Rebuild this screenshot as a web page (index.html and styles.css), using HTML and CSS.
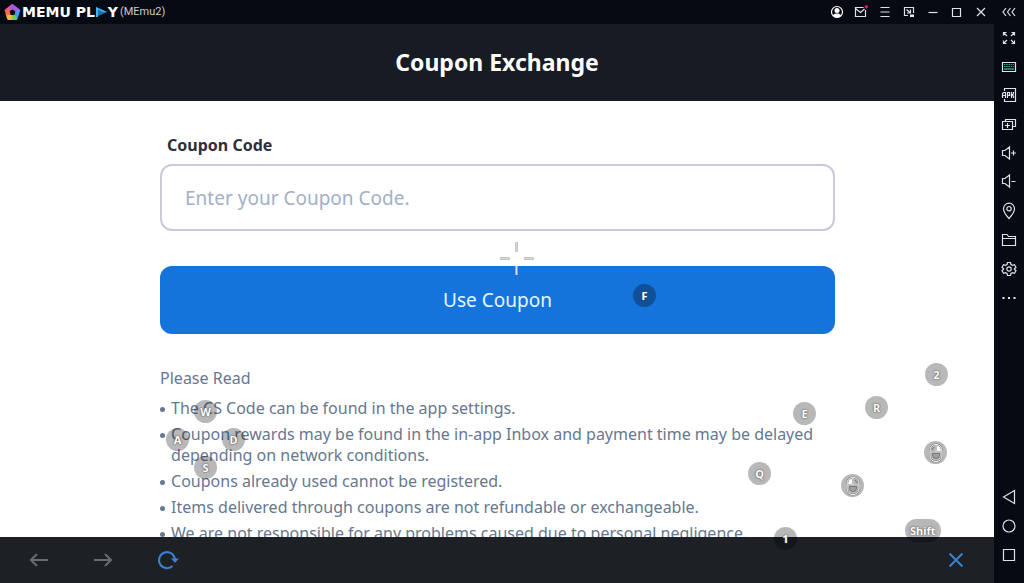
FILE: index.html
```html
<!DOCTYPE html>
<html lang="en">
<head>
<meta charset="utf-8">
<title>Coupon Exchange</title>
<link rel="stylesheet" href="styles.css">
</head>
<body>
<div class="window">
  <header class="titlebar">
    <div class="brand">
      <svg class="brand-mark" width="17" height="17" viewBox="0 0 17 17">
        <path fill="#e85c8f" d="M8 0L1 5.500L5 8L9 5Z"/>
        <path fill="#a45be0" d="M8 0Q8.500 0 9 .3L16 5.500L11.500 8L8.500 5.500L5 5.500Z"/>
        <path fill="#3f9cf0" d="M16 5.500Q16.500 6 16.300 6.500L13.500 15L10 11L11 7Z"/>
        <path fill="#6ad04a" d="M13.500 15Q13 16 12 16L7 16L6.500 10.500L10.500 10.500Z"/>
        <path fill="#f6b73c" d="M8 16L4.500 16Q3.500 16 3.200 15L1.500 10L5.500 7L7.500 11Z"/>
        <path fill="#f4703c" d="M1 5.500Q.5 6 .7 6.700L2.200 11.500L7 10.500L5.500 7Z"/>
        <path fill="#080c14" d="M8.500 5.400L11.400 7.500L10.300 10.900H6.700L5.600 7.500Z"/>
      </svg>
      <span class="brand-name">MEMU PL<svg class="brand-play" width="11" height="10" viewBox="0 0 11 10"><path fill="#1b6fb5" d="M0 0L11 5L0 10Z"/><path fill="#45b0ee" d="M0 0L11 5H7L2 2.500V10H0Z"/></svg>Y</span>
      <span class="instance">(MEmu2)</span>
    </div>
    <div class="window-tools">
      <button class="icon-button" aria-label="Account"><svg width="14" height="14" viewBox="0 0 14 14"><circle cx="7" cy="7" r="5.500" fill="none" stroke="#fff" stroke-width="1.200"/><circle cx="7" cy="5.500" r="2.500" fill="#fff"/><path fill="#fff" d="M2.800 11C3.500 8.900 5 8.500 7 8.500S10.500 8.900 11.200 11Q9.500 12.600 7 12.600T2.800 11Z"/></svg></button>
      <button class="icon-button" aria-label="Messages"><svg width="14" height="14" viewBox="0 0 14 14"><path class="line" d="M9.500 2.500H1.500V11.500H11.500V5M1.500 3.500L6.500 7.500L10.500 4"/><circle cx="12.300" cy="1.700" r="1.700" fill="#e8125c"/></svg></button>
      <button class="icon-button" aria-label="Menu"><svg width="14" height="14" viewBox="0 0 14 14"><path class="line" d="M2.500 2.500H11.500M2.500 7H11.500M2.500 11.500H11.500"/></svg></button>
      <button class="icon-button" aria-label="Mini window"><svg width="14" height="14" viewBox="0 0 14 14"><path class="line" d="M6 10.500H2.500V2.500H11.500V8M4.500 4.500L8 7.500M8.500 4.500V8H5"/><path d="M8 9.500H12V12H8Z" fill="#e6e8ec"/></svg></button>
      <button class="icon-button" aria-label="Minimize"><svg width="14" height="14" viewBox="0 0 14 14"><path class="line" d="M2.500 7.500H11.500"/></svg></button>
      <button class="icon-button" aria-label="Maximize"><svg width="14" height="14" viewBox="0 0 14 14"><path class="line" d="M2.500 3.500H10.500V11.500H2.500Z"/></svg></button>
      <button class="icon-button" aria-label="Close window"><svg width="14" height="14" viewBox="0 0 14 14"><path class="line" d="M3 3L11 11M11 3L3 11"/></svg></button>
    </div>
    <button class="icon-button collapse" aria-label="Collapse sidebar"><svg width="16" height="14" viewBox="0 0 16 14"><path class="line" d="M5 3L2 7L5 11M9.500 3L6.500 7L9.500 11M14 3L11 7L14 11"/></svg></button>
  </header>

  <div class="app">
    <div class="page">
      <div class="page-header"><h1>Coupon Exchange</h1></div>
      <main class="content">
        <form class="coupon-form">
          <label for="code">Coupon Code</label>
          <input id="code" type="text" placeholder="Enter your Coupon Code.">
          <button class="submit" type="button">Use Coupon</button>
        </form>
        <section class="notes">
          <h2>Please Read</h2>
          <ul>
            <li>The CS Code can be found in the app settings.</li>
            <li>Coupon rewards may be found in the in-app Inbox and payment time may be delayed depending on network conditions.</li>
            <li>Coupons already used cannot be registered.</li>
            <li>Items delivered through coupons are not refundable or exchangeable.</li>
            <li>We are not responsible for any problems caused due to personal negligence.</li>
          </ul>
        </section>
      </main>
      <nav class="browser-bar">
        <button class="icon-button" aria-label="Back"><svg width="20" height="16" viewBox="0 0 20 16"><path class="nav-off" d="M19 8H2M8 2L2 8L8 14"/></svg></button>
        <button class="icon-button" aria-label="Forward"><svg width="20" height="16" viewBox="0 0 20 16"><path class="nav-off" d="M1 8H18M12 2L18 8L12 14"/></svg></button>
        <button class="icon-button" aria-label="Reload"><svg width="22" height="20" viewBox="0 0 22 20"><path class="nav-on" d="M15.500 16A8 8 0 1 1 18 9.500"/><path fill="#3b82d4" d="M14 8.500H22L18 13Z"/></svg></button>
        <button class="icon-button close-page" aria-label="Close page"><svg width="16" height="16" viewBox="0 0 16 16"><path class="nav-on" d="M1.500 1.500L14.500 14.500M14.500 1.500L1.500 14.500"/></svg></button>
      </nav>

      <div class="keymap">
        <svg class="aim" width="34" height="34" viewBox="0 0 34 34"><path fill="#d8d8d8" stroke="#c4c4c4" stroke-width="1" d="M15.500 .5H17.500V9.500H15.500ZM.5 15.500H9.500V17.500H.5ZM24.500 15.500H33.500V17.500H24.500Z"/><path fill="#d5e5f5" d="M15.500 24H17.500V33H15.500Z"/></svg>
        <span class="key key-f">F</span>
        <span class="key key-w">W</span>
        <span class="key key-a">A</span>
        <span class="key key-d">D</span>
        <span class="key key-s">S</span>
        <span class="key key-e">E</span>
        <span class="key key-r">R</span>
        <span class="key key-2">2</span>
        <span class="key key-q">Q</span>
        <span class="key key-1">1</span>
        <span class="key key-shift">Shift</span>
        <span class="key mouse-right"><svg width="16" height="20" viewBox="0 0 16 20"><path fill="#fff" stroke="#777" stroke-width=".6" d="M7.500 1Q1.500 1.500 1.500 8.500H7.500Z"/><path class="mouse-edge" d="M8 1.500Q14 1.500 14 8.500V12Q14 18.500 8 18.500T2 12V8.500Q2 1.500 8 1.500ZM2 9H14M8 1.500V9"/><path class="mouse-line" d="M8 1.500Q14 1.500 14 8.500V12Q14 18.500 8 18.500T2 12V8.500Q2 1.500 8 1.500ZM2 9H14M8 1.500V9"/><path class="mouse-inner" d="M4.500 10.500H11.500V12Q11.500 15.500 8 15.500T4.500 12ZM10 4L12 7"/></svg></span>
        <span class="key mouse-left"><svg width="16" height="20" viewBox="0 0 16 20"><path fill="#fff" stroke="#777" stroke-width=".6" d="M8.500 1Q14.500 1.500 14.500 8.500H8.500Z"/><path class="mouse-edge" d="M8 1.500Q14 1.500 14 8.500V12Q14 18.500 8 18.500T2 12V8.500Q2 1.500 8 1.500ZM2 9H14M8 1.500V9"/><path class="mouse-line" d="M8 1.500Q14 1.500 14 8.500V12Q14 18.500 8 18.500T2 12V8.500Q2 1.500 8 1.500ZM2 9H14M8 1.500V9"/><path class="mouse-inner" d="M4.500 10.500H11.500V12Q11.500 15.500 8 15.500T4.500 12ZM6 4L4 7"/></svg></span>
      </div>
    </div>

    <aside class="sidebar">
      <div class="tools">
        <button class="icon-button" aria-label="Full screen"><svg width="16" height="16" viewBox="0 0 16 16"><path class="line" d="M2.500 5.500V2.500H5.500M2.500 2.500L6 6M10.500 2.500H13.500V5.500M13.500 2.500L10 6M2.500 10.500V13.500H5.500M2.500 13.500L6 10M10.500 13.500H13.500V10.500M13.500 13.500L10 10"/></svg></button>
        <button class="icon-button" aria-label="Key mapping"><svg width="16" height="16" viewBox="0 0 16 16"><path class="line" d="M1.500 3.500H14.500V12.500H1.500Z"/><path fill="none" stroke="#2fa37c" stroke-dasharray="1.500 .7" d="M3 5.500H13M3 7.500H13"/><path stroke="#2fa37c" stroke-width="1.500" d="M3 10H13"/></svg></button>
        <button class="icon-button" aria-label="Install APK"><svg width="16" height="16" viewBox="0 0 16 16"><path class="line" d="M3.500 4V1.500H14.500V14.500H3.500V12M1.500 11V6.500L2.500 5.500H4.500V11M1.500 8.500H4.500M6.500 11V5.500H8.500V8.500H6.500M10.500 5V11M12.500 5V7L10.500 8L12.500 9V11"/></svg></button>
        <button class="icon-button" aria-label="Multiple instances"><svg width="16" height="16" viewBox="0 0 16 16"><path class="line" d="M4.500 5.500V3.500H14.500V10.500H11.500M1.500 5.500H11.500V13.500H1.500ZM6.500 7V12M4 9.500H9"/></svg></button>
        <button class="icon-button" aria-label="Volume up"><svg width="16" height="16" viewBox="0 0 16 16"><path class="line" d="M1.500 5.500H4L8.500 2V14L4 10.500H1.500ZM10 8H15M12.500 5.500V10.500"/></svg></button>
        <button class="icon-button" aria-label="Volume down"><svg width="16" height="16" viewBox="0 0 16 16"><path class="line" d="M1.500 5.500H4L8.500 2V14L4 10.500H1.500ZM10.500 8.500H14.500"/></svg></button>
        <button class="icon-button" aria-label="Location"><svg width="16" height="18" viewBox="0 0 16 18"><path class="line" d="M8 16.500Q2.500 10.500 2.500 6.700A5.500 5.500 0 0 1 13.500 6.700Q13.500 10.500 8 16.500Z"/><circle class="line" cx="8" cy="6.700" r="2.200"/></svg></button>
        <button class="icon-button" aria-label="Shared folder"><svg width="16" height="16" viewBox="0 0 16 16"><path class="line" d="M1.500 13.500V2.500H6L7.500 4.500H14.500V13.500ZM1.500 6.500H14.500"/></svg></button>
        <button class="icon-button" aria-label="Settings"><svg width="16" height="16" viewBox="0 0 16 16"><path class="line" d="M6.500 1.500H9.500L10 3.600L11.500 4.400L13.500 3.700L15 6.300L13.400 7.700V8.300L15 9.700L13.500 12.300L11.500 11.600L10 12.400L9.500 14.500H6.500L6 12.400L4.500 11.600L2.500 12.300L1 9.700L2.600 8.300V7.700L1 6.300L2.500 3.700L4.500 4.400L6 3.600Z"/><circle class="line" cx="8" cy="8" r="2.200"/></svg></button>
        <button class="icon-button" aria-label="More"><svg width="16" height="16" viewBox="0 0 16 16"><path fill="#e6e8ec" d="M1.500 7H3.500V9H1.500ZM7 7H9V9H7ZM12.500 7H14.500V9H12.500Z"/></svg></button>
      </div>
      <div class="android-nav">
        <button class="icon-button" aria-label="Android back"><svg width="16" height="16" viewBox="0 0 16 16"><path class="line" d="M13.500 1.500V14.500L2.500 8Z"/></svg></button>
        <button class="icon-button" aria-label="Android home"><svg width="16" height="16" viewBox="0 0 16 16"><circle class="line" cx="8" cy="8" r="6"/></svg></button>
        <button class="icon-button" aria-label="Android recents"><svg width="16" height="16" viewBox="0 0 16 16"><path class="line" d="M2.500 2.500H13.500V13.500H2.500Z"/></svg></button>
      </div>
    </aside>
  </div>
</div>
</body>
</html>
```
FILE: styles.css
```css
* {
  box-sizing: border-box;
}

body {
  margin: 0;
  background: #060a12;
  color: #66788f;
  font-family: "Noto Sans", sans-serif;
}

h1,
h2,
ul {
  margin: 0;
  padding: 0;
}

.window {
  display: flex;
  flex-direction: column;
  height: 100vh;
}

.icon-button {
  display: flex;
  align-items: center;
  justify-content: center;
  padding: 0;
  border: 0;
  background: none;
}

.line {
  fill: none;
  stroke: #dfe2e6;
  stroke-width: 1.2;
}

/* Title bar */
.titlebar {
  display: flex;
  align-items: center;
  flex: none;
  height: 24px;
  padding-left: 4px;
  background: #060a12;
  color: #fff;
}

.brand {
  display: flex;
  align-items: center;
  flex: 1;
}

.brand-name {
  margin-left: 1px;
  font: bold 14px/24px "DejaVu Sans", sans-serif;
}

.brand-play {
  margin: 0 1px;
}

.instance {
  margin-left: 2px;
  color: #c9ccd1;
  font: 11px/24px Roboto, sans-serif;
}

.window-tools {
  display: flex;
  gap: 10px;
  margin-right: 6px;
}

.collapse {
  width: 30px;
}

.app {
  display: flex;
  flex: 1;
  min-height: 0;
}

/* Web page */
.page {
  position: relative;
  display: flex;
  flex: 1;
  flex-direction: column;
  min-width: 0;
  background: #fff;
}

.page-header {
  flex: none;
  padding: 22px 0;
  background: #171b24;
  color: #fff;
  text-align: center;
}

h1 {
  font-size: 23px;
  line-height: 33px;
}

.content {
  flex: 1;
  min-height: 0;
  width: 68%;
  margin: 0 auto;
  padding: 32px 0 0 1px;
  overflow: hidden;
}

.coupon-form {
  display: flex;
  flex-direction: column;
}

label {
  padding-left: 7px;
  color: #2d3038;
  font-size: 16px;
  font-weight: bold;
  line-height: 24px;
}

input {
  height: 67px;
  margin-top: 7px;
  padding: 0 23px;
  border: 2px solid #c9cada;
  border-radius: 12px;
  background: #fff;
  color: #2d3038;
  font: 19px "Noto Sans", sans-serif;
}

input::placeholder {
  color: #a3afc6;
}

.submit {
  height: 68px;
  margin-top: 35px;
  padding: 0;
  border: 0;
  border-radius: 12px;
  background: #1574dc;
  color: #e8f5ff;
  font: 19px "Noto Sans", sans-serif;
}

.notes {
  padding-top: 34px;
  font-size: 16px;
  line-height: 21px;
}

h2 {
  font-size: 16px;
  font-weight: normal;
  line-height: 21px;
}

ul {
  display: flex;
  flex-direction: column;
  gap: 5px;
  margin-top: 9px;
  list-style: none;
}

li {
  display: flex;
}

li::before {
  flex: none;
  width: 5px;
  height: 5px;
  margin: 9px 6px 0 0;
  border-radius: 50%;
  background: #66788f;
  content: "";
}

/* In-app browser controls */
.browser-bar {
  display: flex;
  align-items: center;
  flex: none;
  gap: 44px;
  height: 46px;
  padding: 0 30px 0 29px;
  background: #1d2125;
}

.close-page {
  margin-left: auto;
}

.nav-off {
  fill: none;
  stroke: #696d72;
  stroke-width: 2;
}

.nav-on {
  fill: none;
  stroke: #3b82d4;
  stroke-width: 2;
}

/* Sidebar */
.sidebar {
  display: flex;
  flex: none;
  flex-direction: column;
  justify-content: space-between;
  width: 30px;
  padding-bottom: 14px;
  background: #060a12;
}

.tools,
.android-nav {
  display: flex;
  flex-direction: column;
  align-items: center;
  justify-content: space-around;
  height: 288px;
}

.android-nav {
  height: 87px;
}

/* Key mapping overlay */
.keymap {
  position: absolute;
  inset: 0;
  pointer-events: none;
}

.key {
  position: absolute;
  display: flex;
  align-items: center;
  justify-content: center;
  min-width: 23px;
  height: 23px;
  border-radius: 12px;
  background: rgba(0, 0, 0, 0.28);
  color: #fff;
  font-size: 11px;
  font-weight: bold;
  text-shadow: 0 0 1px #555, 0 0 2px #555;
}

.mouse-line {
  fill: none;
  stroke: #f2f2f2;
  stroke-width: 1;
}

.mouse-edge {
  fill: none;
  stroke: #858585;
  stroke-width: 2;
}

.mouse-inner {
  fill: #a0a0a0;
  stroke: #777;
  stroke-width: 1;
}

.aim {
  position: absolute;
  left: 500px;
  top: 218px;
}

.key-f {
  left: 633px;
  top: 260px;
  background: rgba(0, 0, 0, 0.3);
}

.key-w {
  left: 194px;
  top: 376px;
}

.key-a {
  left: 166px;
  top: 404px;
}

.key-d {
  left: 222px;
  top: 404px;
}

.key-s {
  left: 194px;
  top: 432px;
}

.key-e {
  left: 793px;
  top: 378px;
}

.key-r {
  left: 865px;
  top: 372px;
}

.key-2 {
  left: 925px;
  top: 339px;
}

.key-q {
  left: 748px;
  top: 438px;
}

.key-1 {
  left: 774px;
  top: 503px;
}

.key-shift {
  left: 905px;
  top: 495px;
  padding: 0 5px;
}

.mouse-right {
  left: 841px;
  top: 450px;
}

.mouse-left {
  left: 924px;
  top: 417px;
}
```
